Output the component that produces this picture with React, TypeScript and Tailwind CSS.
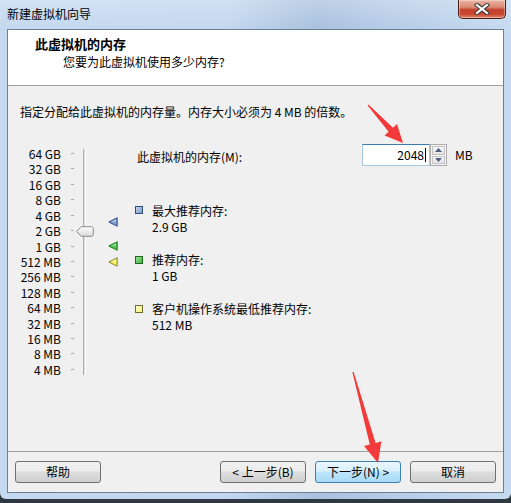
import React from "react";

const rows = [
  "64 GB", "32 GB", "16 GB", "8 GB", "4 GB", "2 GB", "1 GB", "512 MB",
  "256 MB", "128 MB", "64 MB", "32 MB", "16 MB", "8 MB", "4 MB",
];

function Marker({ fill, hi, stroke, className }: { fill: string; hi: string; stroke: string; className: string }) {
  return (
    <svg className={className} width="10" height="10" viewBox="0 0 10 10">
      <polygon points="0.8,5 9.2,0.8 9.2,9.2" fill={fill} stroke={stroke} strokeWidth="1" />
      <polygon points="3,5 8,2.5 8,4.5" fill={hi} opacity="0.8" />
    </svg>
  );
}

function Btn({ children, active }: { children: React.ReactNode; active?: boolean }) {
  return (
    <div
      className={
        active
          ? "w-[86px] h-[22px] rounded-[3px] border border-[#3c7fb1] bg-[linear-gradient(#eaf6fd_0%,#d9f0fc_45%,#bee6fd_50%,#a7d9f5_100%)] flex items-center justify-center text-[12px] leading-[16px] text-black"
          : "w-[86px] h-[22px] rounded-[3px] border border-[#707070] bg-[linear-gradient(#f2f2f2_0%,#ebebeb_45%,#dddddd_50%,#cfcfcf_100%)] flex items-center justify-center text-[12px] leading-[16px] text-black"
      }
    >
      {children}
    </div>
  );
}

export default function App() {
  return (
    <div className="w-[511px] h-[503px] relative overflow-hidden bg-[#2f3741] font-['Noto_Sans_CJK_SC','Noto_Sans',sans-serif] text-black">
      <div className="w-[511px] h-[499px] rounded-b-[6px] flex flex-col bg-[linear-gradient(90deg,#c4d9f0_0%,#c2d7ef_45%,#a9c1dd_62%,#b4cbe6_75%,#c6daf0_100%)]">
        {/* title bar */}
        <div className="h-[29px] flex items-center pl-[7px] shrink-0 bg-[linear-gradient(rgba(255,255,255,0.25),rgba(255,255,255,0))]">
          <span className="text-[12px] leading-[16px] mt-[-1px]">新建虚拟机向导</span>
        </div>

        {/* client */}
        <div className="mx-[7px] h-[464px] border border-[#6b7f96] flex flex-col shrink-0">
          {/* header */}
          <div className="h-[56px] bg-white border-b border-[#a0a0a0] flex flex-col shrink-0">
            <div className="pl-[27px] pt-[6px] text-[13px] leading-[16px] font-bold">此虚拟机的内存</div>
            <div className="pl-[55px] mt-[2px] text-[12px] leading-[16px]">您要为此虚拟机使用多少内存?</div>
          </div>

          {/* content */}
          <div className="flex-1 bg-[#f0f0f0] flex flex-col">
            <div className="pl-[12px] pt-[18px] text-[12px] leading-[16px]">
              指定分配给此虚拟机的内存量。内存大小必须为 4 MB 的倍数。
            </div>

            <div className="mt-[24px] flex flex-row">
              {/* labels */}
              <div className="w-[53px] mt-[2px] h-[231px] flex flex-col justify-between">
                {rows.map((r) => (
                  <div key={r} className="h-[15px] text-right text-[12px] leading-[15px] whitespace-nowrap">
                    {r}
                  </div>
                ))}
              </div>
              {/* ticks */}
              <div className="w-[3px] ml-[10px] mt-[2px] h-[231px] flex flex-col justify-between">
                {rows.map((r) => (
                  <div key={r} className="h-[15px] flex items-center">
                    <div className="w-[3px] h-px bg-[#a8a8a8]" />
                  </div>
                ))}
              </div>
              {/* track */}
              <div className="relative ml-[9px] mt-[5px] w-[3px] h-[226px] border-l border-[#b0b0b0] bg-[#dcdcdc] border-r border-r-white">
                <svg className="absolute left-[-8px] top-[77px]" width="18" height="11" viewBox="0 0 18 11">
                  <defs>
                    <linearGradient id="tg" x1="0" y1="0" x2="0" y2="1">
                      <stop offset="0" stopColor="#ffffff" />
                      <stop offset="1" stopColor="#dadada" />
                    </linearGradient>
                  </defs>
                  <path d="M0.7 5.5 L5.2 0.7 H15.3 Q17.3 0.7 17.3 2.7 V8.3 Q17.3 10.3 15.3 10.3 H5.2 Z" fill="url(#tg)" stroke="#8c8c8c" strokeWidth="1" />
                </svg>
              </div>
              {/* markers */}
              <div className="relative ml-[22px] mt-[2px] w-[10px] h-[231px]">
                <Marker className="absolute left-0 top-[71px]" fill="#7f9fd0" hi="#d4e2f6" stroke="#2d4f86" />
                <Marker className="absolute left-0 top-[95px]" fill="#53c253" hi="#c8f2c8" stroke="#1c7a1c" />
                <Marker className="absolute left-0 top-[111px]" fill="#f2f25a" hi="#ffffd0" stroke="#86862a" />
              </div>

              {/* right column */}
              <div className="ml-[17px] flex flex-col">
                <div className="h-[22px] flex flex-row items-center">
                  <div className="w-[227px] pl-[2px] pt-[3px] text-[12px] leading-[16px]">此虚拟机的内存(M):</div>
                  <div className="w-[68px] h-[22px] bg-white border border-[#a9c8e3] border-t-[#3d7bad] flex items-center justify-end pr-[3px]">
                    <span className="text-[12px] leading-[16px]">2048</span>
                    <span className="w-px h-[14px] bg-black ml-px" />
                  </div>
                  <div className="w-[17px] h-[22px] border border-[#acacac] bg-[#f4f4f4] flex flex-col p-px gap-px">
                    <div className="flex-1 border border-[#c4c4c4] bg-[linear-gradient(#f8f8f8,#e4e4e4)] flex items-center justify-center">
                      <svg width="7" height="4" viewBox="0 0 7 4"><polygon points="0,4 3.5,0 7,4" fill="#4c5f85" /></svg>
                    </div>
                    <div className="flex-1 border border-[#c4c4c4] bg-[linear-gradient(#f8f8f8,#e4e4e4)] flex items-center justify-center">
                      <svg width="7" height="4" viewBox="0 0 7 4"><polygon points="0,0 3.5,4 7,0" fill="#4c5f85" /></svg>
                    </div>
                  </div>
                  <div className="ml-[8px] text-[12px] leading-[16px]">MB</div>
                </div>

                <div className="mt-[37px] flex flex-col gap-[17px]">
                  <div className="flex flex-row">
                    <div className="w-[8px] h-[8px] mt-[3px] border border-[#2c4c7c] bg-[linear-gradient(135deg,#c2d3ec,#7e9cc8)]" />
                    <div className="ml-[9px] text-[12px] leading-[16px]">
                      <div>最大推荐内存:</div>
                      <div>2.9 GB</div>
                    </div>
                  </div>
                  <div className="flex flex-row">
                    <div className="w-[8px] h-[8px] mt-[4px] border border-[#1e6a1e] bg-[linear-gradient(135deg,#9be39b,#3cb43c)]" />
                    <div className="ml-[9px] text-[12px] leading-[16px]">
                      <div>推荐内存:</div>
                      <div>1 GB</div>
                    </div>
                  </div>
                  <div className="flex flex-row">
                    <div className="w-[8px] h-[8px] mt-[4px] border border-[#6e6e2c] bg-[linear-gradient(135deg,#ffffc8,#f6f678)]" />
                    <div className="ml-[9px] text-[12px] leading-[16px]">
                      <div>客户机操作系统最低推荐内存:</div>
                      <div>512 MB</div>
                    </div>
                  </div>
                </div>
              </div>
            </div>

            {/* footer */}
            <div className="mt-auto h-[41px] border-t border-[#a0a0a0] px-[7px] pt-[9px] flex flex-row">
              <Btn>帮助</Btn>
              <div className="flex-1" />
              <div className="flex flex-row gap-[9px]">
                <Btn>&lt; 上一步(B)</Btn>
                <Btn active>下一步(N) &gt;</Btn>
                <Btn>取消</Btn>
              </div>
            </div>
          </div>
        </div>
      </div>

      {/* close button */}
      <div className="absolute top-0 left-[458px] w-[48px] h-[19px] rounded-b-[5px] border border-t-0 border-[#4a2119] bg-[linear-gradient(#eab4a4_0%,#d98a72_40%,#c4402a_55%,#c94a31_80%,#e0866a_100%)] flex items-center justify-center shadow-[inset_0_0_0_1px_rgba(255,255,255,0.35)]">
        <svg width="16" height="12" viewBox="0 0 16 12">
          <path d="M3 2 L13 10 M13 2 L3 10" stroke="#3a3a3a" strokeWidth="4.2" strokeLinecap="square" />
          <path d="M3 2 L13 10 M13 2 L3 10" stroke="#ffffff" strokeWidth="2.2" strokeLinecap="square" />
        </svg>
      </div>

      {/* red annotation arrows */}
      <svg className="absolute left-0 top-0 pointer-events-none" width="511" height="503" viewBox="0 0 511 503">
        <polygon
          points="368.4,104.6 393.0,127.8 397.0,124.0 403,143 384.6,135.6 388.6,131.8 367.6,105.4"
          fill="#f23a3a"
        />
        <polygon
          points="353.6,371.8 375.6,442.9 381.4,441.3 378,463 364.0,446.1 369.8,444.5 352.4,372.2"
          fill="#f23a3a"
        />
      </svg>
    </div>
  );
}
